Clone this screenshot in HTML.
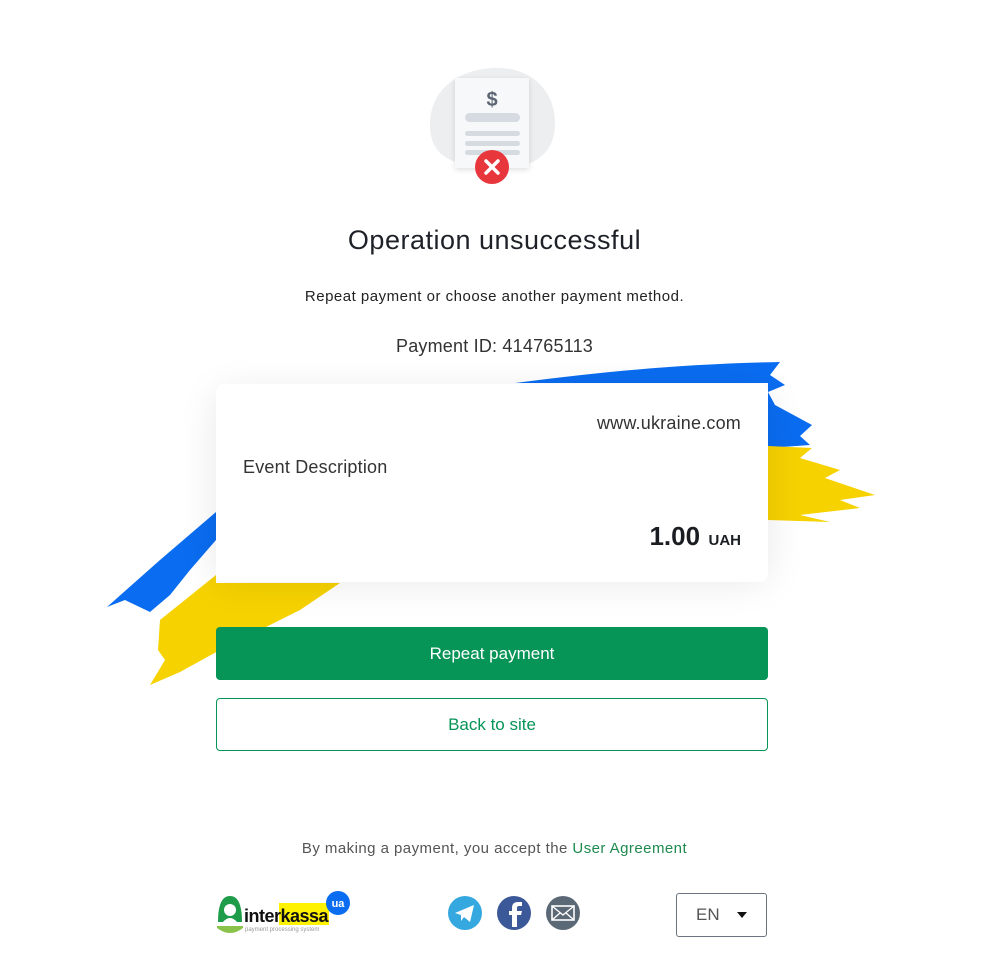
<!DOCTYPE html>
<html><head><meta charset="utf-8"><style>
body{margin:0;width:989px;height:965px;background:#fff;font-family:"Liberation Sans",sans-serif;position:relative;overflow:hidden;color:#222}
.a{position:absolute}
.c{text-align:center;left:0;width:989px}
</style></head><body>
<svg class="a" style="left:0;top:0" width="989" height="965">
 <defs>
  <filter id="sh" x="-30%" y="-30%" width="160%" height="160%"><feGaussianBlur stdDeviation="20"/></filter>
  <filter id="s2"><feGaussianBlur stdDeviation="3"/></filter>
 </defs>
 <path d="M493 68 C530 66 556 90 555 125 C554 160 525 170 493 168 C455 166 430 158 430 125 C430 92 455 70 493 68Z" fill="#eceef0"/>
 <rect x="455" y="80" width="74" height="90" fill="#000" opacity=".12" filter="url(#s2)"/>
 <rect x="455" y="78" width="74" height="90" fill="#f7f8f9"/>
 <text x="492" y="106" text-anchor="middle" font-family="Liberation Sans" font-weight="bold" font-size="20" fill="#5b6573">$</text>
 <rect x="465" y="113" width="55" height="9" rx="4.5" fill="#d6dbe2"/>
 <rect x="465" y="131" width="55" height="5" rx="2.5" fill="#d6dbe2"/>
 <rect x="465" y="141" width="55" height="5" rx="2.5" fill="#d6dbe2"/>
 <rect x="465" y="150" width="55" height="5" rx="2.5" fill="#d6dbe2"/>
 <circle cx="492" cy="167" r="17" fill="#e8363d"/>
 <path d="M486 161 L498 173 M498 161 L486 173" stroke="#fff" stroke-width="3.5" stroke-linecap="round"/>
 <path d="M515 383 C600 372 680 364 780 362 L770 375 L785 385 L768 392 L775 405 L812 425 L800 436 L810 445 L768 448 L768 383 Z" fill="#0a6cf0"/>
 <path d="M768 446 L812 448 L800 458 L840 470 L825 478 L875 495 L840 500 L860 508 L800 515 L830 522 L768 520 Z" fill="#f6d200"/>
 <path d="M107 607 L160 560 L216 512 L216 540 L190 570 L170 595 L150 612 L125 600 Z" fill="#0a6cf0"/>
 <path d="M160 620 L216 575 L216 583 L340 583 L300 610 L260 630 L220 650 L180 672 L150 685 L165 660 L158 650 Z" fill="#f6d200"/>
 <rect x="216" y="392" width="552" height="190" rx="8" fill="#000" opacity=".09" filter="url(#sh)"/>
 <rect x="216" y="384" width="552" height="198" rx="8" fill="#fff"/>
</svg>
<div class="a c" style="top:225px;font-size:27px;color:#1e2228;letter-spacing:.5px">Operation unsuccessful</div>
<div class="a c" style="top:288px;font-size:15px;color:#222;letter-spacing:.5px">Repeat payment or choose another payment method.</div>
<div class="a c" style="top:336px;font-size:18px;color:#333;letter-spacing:.2px">Payment ID: 414765113</div>
<div class="a" style="right:248px;top:413px;font-size:18px;color:#333;letter-spacing:.2px">www.ukraine.com</div>
<div class="a" style="left:243px;top:457px;font-size:18px;color:#333;letter-spacing:.2px">Event Description</div>
<div class="a" style="right:248px;top:521px;color:#1a1d22;font-weight:bold"><span style="font-size:26px">1.00</span> <span style="font-size:15px;margin-left:4px">UAH</span></div>
<div class="a" style="left:216px;top:627px;width:552px;height:53px;background:#069457;border-radius:4px;color:#fff;font-size:17px;line-height:53px;text-align:center">Repeat payment</div>
<div class="a" style="left:216px;top:698px;width:550px;height:51px;border:1px solid #069457;border-radius:4px;color:#069457;font-size:17px;line-height:51px;text-align:center">Back to site</div>
<div class="a c" style="top:840px;font-size:15px;color:#555;letter-spacing:.45px">By making a payment, you accept the <span style="color:#1e8a4f">User Agreement</span></div>
<svg class="a" style="left:214px;top:890px" width="140" height="50">
 <path d="M4 32 Q4 6 16 6 Q28 6 28 32 Z" fill="#1e9c4a"/>
 <circle cx="16" cy="20" r="6" fill="#fff"/>
 <path d="M9 32 Q16 24 23 32Z" fill="#fff"/>
 <path d="M3 38 Q16 48 29 38 L29 36 L3 36Z" fill="#8bc34a"/>
 <rect x="65" y="13" width="50" height="22" fill="#fff200"/>
 <text x="30" y="32" font-family="Liberation Sans" font-weight="bold" font-size="18" fill="#111" letter-spacing="-0.5">interkassa</text>
 <text x="31" y="41" font-family="Liberation Sans" font-size="6" fill="#999">payment processing system</text>
 <circle cx="124" cy="13" r="12" fill="#0a6cf0"/>
 <text x="124" y="17" text-anchor="middle" font-family="Liberation Sans" font-weight="bold" font-size="11" fill="#fff">ua</text>
</svg>
<svg class="a" style="left:446px;top:894px" width="140" height="38">
 <circle cx="19" cy="19" r="17" fill="#35a8e0"/>
 <path d="M9 19 L28 11 L24 28 L18 23 L15 27 L15 21 Z" fill="#fff"/>
 <circle cx="68" cy="19" r="17" fill="#3b5998"/>
 <path d="M71 33 V21 H75 L76 17 H71 V14 Q71 12 73 12 H76 V8 H72 Q66 8 66 14 V17 H63 V21 H66 V33Z" fill="#fff"/>
 <circle cx="117" cy="19" r="17" fill="#5b6876"/>
 <rect x="106" y="12" width="22" height="14" fill="none" stroke="#fff" stroke-width="1.6"/>
 <path d="M106 12 L117 21 L128 12 M106 26 L114 19 M128 26 L120 19" fill="none" stroke="#fff" stroke-width="1.4"/>
</svg>
<div class="a" style="left:676px;top:893px;width:89px;height:42px;border:1px solid #6b7480;border-radius:3px"></div>
<div class="a" style="left:696px;top:905px;font-size:17px;color:#555">EN</div>
<div class="a" style="left:737px;top:912px;width:0;height:0;border-left:5px solid transparent;border-right:5px solid transparent;border-top:6px solid #111"></div>
</body></html>
